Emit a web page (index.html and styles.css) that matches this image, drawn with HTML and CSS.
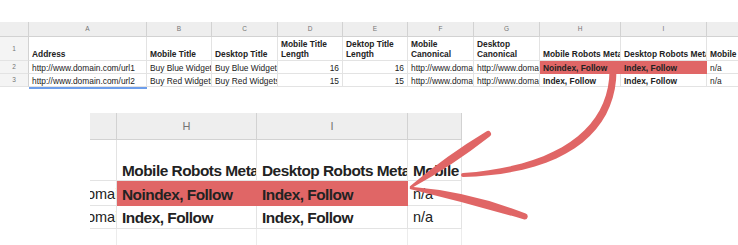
FILE: index.html
```html
<!DOCTYPE html>
<html lang="en">
<head>
<meta charset="utf-8">
<title>Robots meta comparison</title>
<link rel="stylesheet" href="styles.css">
</head>
<body>
<div class="sheet">
  <div class="grid">
    <div class="c h corner"></div>
    <div class="c h">A</div>
    <div class="c h">B</div>
    <div class="c h">C</div>
    <div class="c h">D</div>
    <div class="c h">E</div>
    <div class="c h">F</div>
    <div class="c h">G</div>
    <div class="c h">H</div>
    <div class="c h">I</div>
    <div class="c h"></div>

    <div class="c rn">1</div>
    <div class="c b t">Address</div>
    <div class="c b t">Mobile Title</div>
    <div class="c b t">Desktop Title</div>
    <div class="c b t wrap">Mobile Title Length</div>
    <div class="c b t wrap">Dektop Title Length</div>
    <div class="c b t wrap">Mobile Canonical</div>
    <div class="c b t wrap">Desktop Canonical</div>
    <div class="c b t">Mobile Robots Meta</div>
    <div class="c b t">Desktop Robots Meta</div>
    <div class="c b t">Mobile</div>

    <div class="c rn">2</div>
    <div class="c">http://www.domain.com/url1</div>
    <div class="c">Buy Blue Widgets</div>
    <div class="c">Buy Blue Widgets</div>
    <div class="c num">16</div>
    <div class="c num">16</div>
    <div class="c">http://www.domain.com/url1</div>
    <div class="c">http://www.domain.com/url1</div>
    <div class="c b hl">Noindex, Follow</div>
    <div class="c b hl">Index, Follow</div>
    <div class="c">n/a</div>

    <div class="c rn">3</div>
    <div class="c">http://www.domain.com/url2</div>
    <div class="c">Buy Red Widgets</div>
    <div class="c">Buy Red Widgets</div>
    <div class="c num">15</div>
    <div class="c num">15</div>
    <div class="c">http://www.domain.com/url2</div>
    <div class="c">http://www.domain.com/url2</div>
    <div class="c b">Index, Follow</div>
    <div class="c b">Index, Follow</div>
    <div class="c">n/a</div>

    <div class="sel"></div>
  </div>
</div>

<div class="zoomed">
  <div class="grid">
    <div class="c h"></div>
    <div class="c h">H</div>
    <div class="c h">I</div>
    <div class="c h"></div>

    <div class="c b t wrap">Desktop Canonical</div>
    <div class="c b t">Mobile Robots Meta</div>
    <div class="c b t">Desktop Robots Meta</div>
    <div class="c b t">Mobile</div>

    <div class="c">http://www.domain.com/url1</div>
    <div class="c b hl">Noindex, Follow</div>
    <div class="c b hl">Index, Follow</div>
    <div class="c">n/a</div>

    <div class="c">http://www.domain.com/url2</div>
    <div class="c b">Index, Follow</div>
    <div class="c b">Index, Follow</div>
    <div class="c">n/a</div>

    <div class="c tail"></div>
    <div class="c tail"></div>
    <div class="c tail"></div>
    <div class="c tail"></div>
  </div>
</div>

<svg class="arrows" width="738" height="245" viewBox="0 0 738 245" aria-hidden="true">
  <g fill="#e06666">
    <!-- sweeping stroke from the highlighted row down to the enlarged view -->
    <path d="M609.5,70 L616.5,70 C616.5,133 565,174 463,177 A2,2 0 0 1 463,173 C559,166 609.5,128 609.5,70 Z"/>
    <!-- arrow head barbs, brush-like: thin at the point, full in the middle -->
    <path d="M410.3,186 Q446.2,155.6 486.3,131.5 A3,3 0 0 1 489.7,136.5 Q452.8,165.4 411.7,188 A1.2,1.2 0 0 1 410.3,186 Z"/>
    <path d="M411.3,186.8 Q470.6,191.7 525.7,213.6 A3,3 0 0 1 524.3,219.4 Q467.8,203.1 410.7,189.2 A1.2,1.2 0 0 1 411.3,186.8 Z"/>
  </g>
</svg>
</body>
</html>
```

FILE: styles.css
```css
* {
  box-sizing: border-box;
  margin: 0;
  padding: 0;
}

html,
body {
  background: #fff;
}

body {
  position: relative;
  width: 738px;
  height: 245px;
  overflow: hidden;
  font-family: "Liberation Sans", Arial, Helvetica, sans-serif;
  color: #222;
}

/* ---------- spreadsheet strip ---------- */
.sheet {
  margin-top: 22px;
  height: 67px;
  overflow: hidden;
}

.sheet .grid {
  display: grid;
  width: max-content;
  grid-template-columns: 29px 118px 65px 66px 65px 65px 66px 66px 81px 86px 60px;
  grid-template-rows: 15px 24px 13px 13px 4px;
  font-size: 8.4px;
  line-height: 10px;
}

.c {
  display: flex;
  align-items: flex-end;
  overflow: hidden;
  white-space: nowrap;
  padding: 0 3px;
  border-right: 1px solid #e3e3e3;
  border-bottom: 1px solid #e3e3e3;
}

.h {
  justify-content: center;
  align-items: center;
  background: #eeeeee;
  color: #747474;
  font-size: 6.5px;
  border-color: #d2d2d2;
}

.rn {
  justify-content: center;
  align-items: center;
  background: #f4f4f4;
  color: #747474;
  font-size: 6.5px;
  border-right-color: #d2d2d2;
}

.b {
  font-weight: bold;
}

.t {
  padding-bottom: 1px;
}

.wrap {
  white-space: normal;
}

.num {
  justify-content: flex-end;
}

.hl {
  background: #e06666;
  border-color: #e06666;
}

.sel {
  grid-column: 2;
  grid-row: 5;
  border-top: 2px solid #6d9eeb;
}

/* ---------- enlarged view ---------- */
.zoomed {
  margin: 24px 0 0 90px;
  width: 372px;
  height: 132px;
  overflow: hidden;
}

.zoomed .grid {
  display: grid;
  width: max-content;
  margin-left: -87px;
  grid-template-columns: 114px 140px 151px 54px;
  grid-template-rows: 27px 41px 25px 23px 16px;
  font-size: 14.5px;
  line-height: 17px;
}

.zoomed .c {
  padding: 0 5px 2px;
}

.zoomed .b {
  font-size: 15.4px;
  letter-spacing: -0.5px;
}

.zoomed .t {
  padding-bottom: 1px;
}

.zoomed .h {
  font-size: 11px;
  padding: 0;
}

.zoomed .tail {
  border-bottom: none;
  border-right-color: #ececec;
}

/* ---------- hand-drawn arrow ---------- */
.arrows {
  position: absolute;
  left: 0;
  top: 0;
  pointer-events: none;
}
```
